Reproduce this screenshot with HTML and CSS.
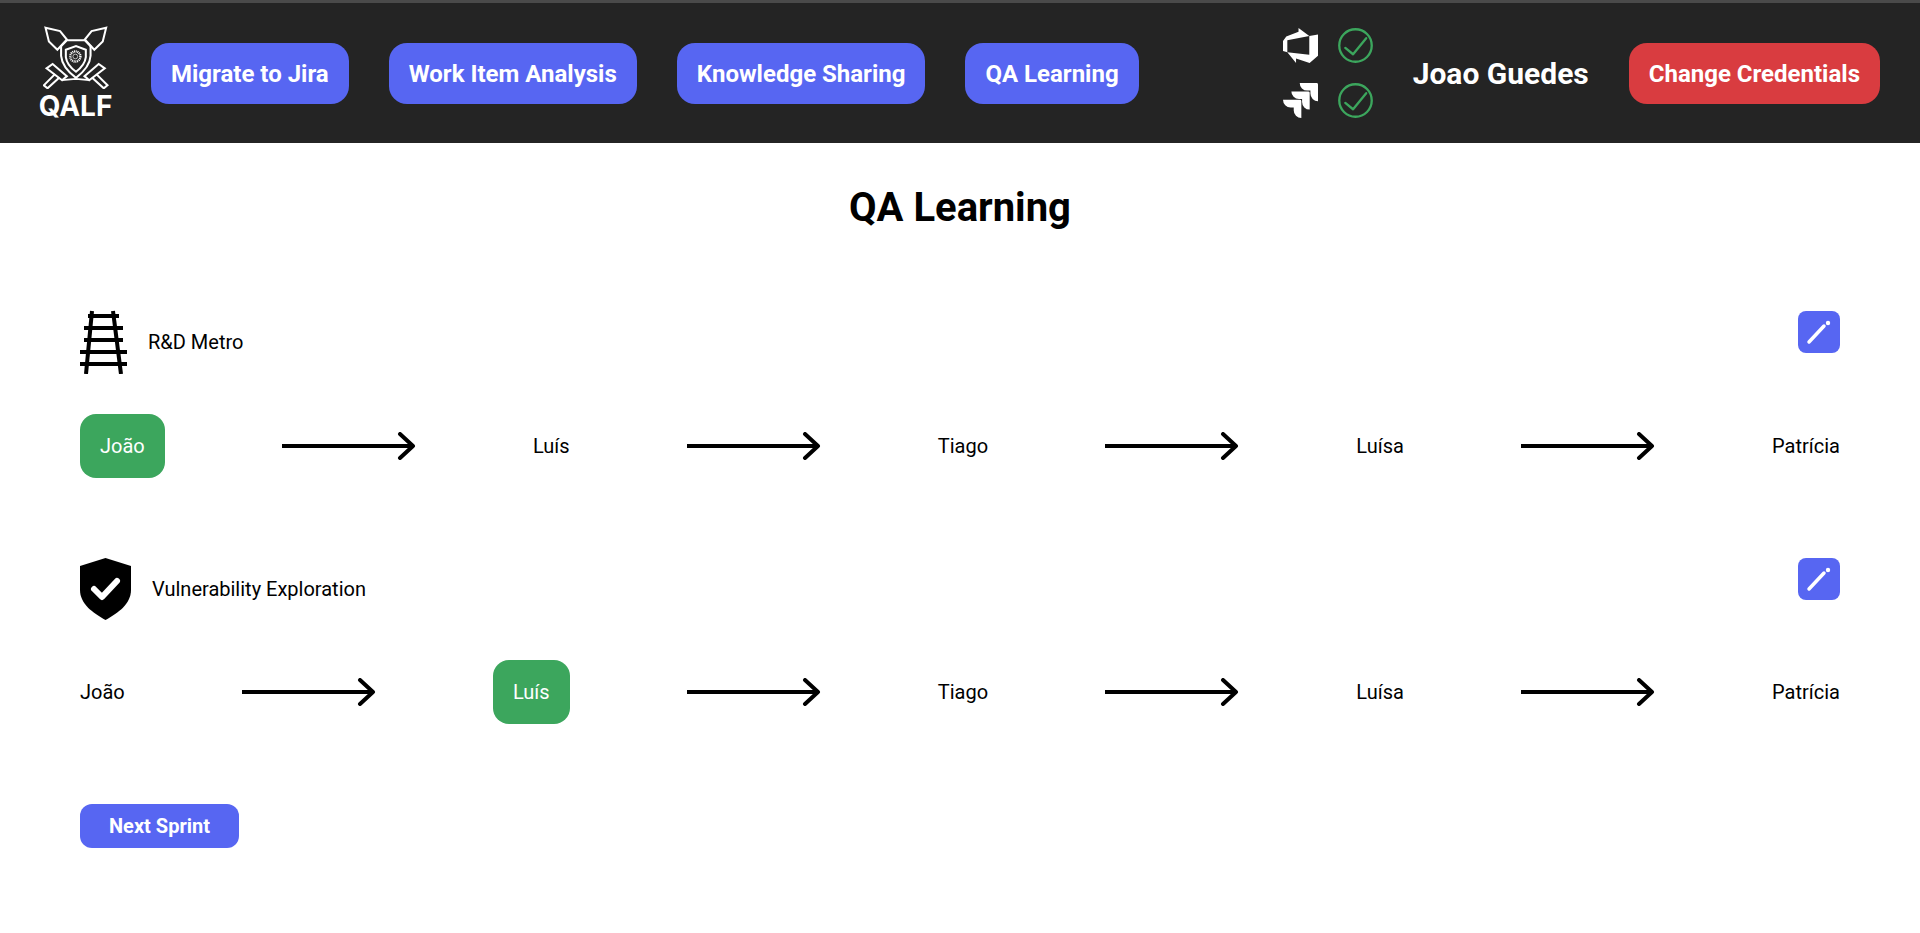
FILE: index.html
```html
<!DOCTYPE html>
<html lang="en">
<head>
    <meta charset="UTF-8">
    <meta name="viewport" content="width=device-width, initial-scale=1.0">
    <title>QA Learning</title>
    <link rel="stylesheet" href="styles.css">
</head>
<body>
    <header class="topbar">
        <div class="logo">
            <svg class="logo-mark" viewBox="40 30 194 186" fill="none" stroke="#fff" stroke-width="6" stroke-linejoin="miter">
                <path d="M47 35 L90 45 L110 70 L82 100 L57 76 Z"/>
                <path d="M226 35 L183 45 L163 70 L191 100 L216 76 Z"/>
                <path d="M92 91 L110 72 H163 L181 91"/>
                <path d="M93 88 V118 Q96 152 137 183 Q178 152 180 118 V88"/>
                <path d="M107 100 L137 89 L166 100 V122 Q163 146 137 165 Q110 146 107 122 Z"/>
                <circle cx="135" cy="120" r="15" stroke-width="7" stroke-dasharray="3 2"/>
                <circle cx="135" cy="120" r="7" stroke-width="2"/>
                <path d="M50 155 L68 142 L110 178 L96 190 Z"/>
                <path d="M222 155 L204 142 L162 178 L176 190 Z"/>
                <path d="M75 172 L42 205 L53 214 L88 182"/>
                <path d="M197 172 L230 205 L219 214 L184 182"/>
                <path d="M96 190 L137 186 L176 190" stroke-width="5"/>
            </svg>
            <span class="logo-text">QALF</span>
        </div>
        <nav class="nav">
            <a class="btn" href="#">Migrate to Jira</a>
            <a class="btn" href="#">Work Item Analysis</a>
            <a class="btn" href="#">Knowledge Sharing</a>
            <a class="btn" href="#">QA Learning</a>
        </nav>
        <div class="status">
            <svg class="status-icon" viewBox="0 0 24 24" fill="#fff"><path d="M0 8.877L2.247 5.91l8.405-3.416V.022l7.37 5.393L2.966 8.338v8.225L0 15.707zm24-4.45v14.651l-5.753 4.9-9.303-3.057v3.056l-5.978-7.416 15.057 1.798V5.415z"/></svg>
            <svg class="status-icon" viewBox="0 0 36 36" fill="none" stroke="#3ca65d" stroke-width="2.4"><circle cx="18" cy="18" r="16.7"/><path d="M7.5 20.5 L15.5 27 L29 10.5" stroke-linecap="round" stroke-linejoin="round"/></svg>
            <svg class="status-icon" viewBox="0 0 24 24" fill="#fff"><path d="M11.571 11.513H0a5.218 5.218 0 0 0 5.232 5.215h2.13v2.057A5.215 5.215 0 0 0 12.575 24V12.518a1.005 1.005 0 0 0-1.005-1.005zm5.723-5.756H5.736a5.215 5.215 0 0 0 5.215 5.214h2.129v2.058a5.218 5.218 0 0 0 5.215 5.214V6.758a1.001 1.001 0 0 0-1.001-1.001zM23.013 0H11.455a5.215 5.215 0 0 0 5.215 5.215h2.129v2.057A5.215 5.215 0 0 0 24 12.483V1.005A1.001 1.001 0 0 0 23.013 0Z"/></svg>
            <svg class="status-icon" viewBox="0 0 36 36" fill="none" stroke="#3ca65d" stroke-width="2.4"><circle cx="18" cy="18" r="16.7"/><path d="M7.5 20.5 L15.5 27 L29 10.5" stroke-linecap="round" stroke-linejoin="round"/></svg>
        </div>
        <span class="username">Joao Guedes</span>
        <a class="btn btn-red" href="#">Change Credentials</a>
    </header>

    <main class="content">
        <h1 class="title">QA Learning</h1>

        <section class="track">
            <div class="track-head">
                <svg class="track-icon rail" viewBox="0 0 47 64" fill="none" stroke="#000" stroke-width="4">
                    <path d="M12 1 L6 64"/>
                    <path d="M33 1 L41 64"/>
                    <path d="M8 6 H39"/>
                    <path d="M4 18 H43"/>
                    <path d="M4 30 H43"/>
                    <path d="M0 42 H47"/>
                    <path d="M0 54 H47"/>
                </svg>
                <span class="track-name">R&amp;D Metro</span>
                <a class="edit" href="#">
                    <svg viewBox="0 0 42 42" width="42" height="42" fill="none" stroke="#fff" stroke-linecap="round">
                        <path d="M11 31 L26 15" stroke-width="3.5"/>
                        <circle cx="30" cy="12" r="2.2" fill="#fff" stroke="none"/>
                    </svg>
                </a>
            </div>
            <div class="steps">
                <span class="step step-active">João</span>
                <svg class="arrow" viewBox="0 0 134 28" fill="none" stroke="#000" stroke-width="4" stroke-linecap="round" stroke-linejoin="round"><path d="M0 14 H130"/><path d="M118 2 L131 14 L118 26"/></svg>
                <span class="step">Luís</span>
                <svg class="arrow" viewBox="0 0 134 28" fill="none" stroke="#000" stroke-width="4" stroke-linecap="round" stroke-linejoin="round"><path d="M0 14 H130"/><path d="M118 2 L131 14 L118 26"/></svg>
                <span class="step">Tiago</span>
                <svg class="arrow" viewBox="0 0 134 28" fill="none" stroke="#000" stroke-width="4" stroke-linecap="round" stroke-linejoin="round"><path d="M0 14 H130"/><path d="M118 2 L131 14 L118 26"/></svg>
                <span class="step">Luísa</span>
                <svg class="arrow" viewBox="0 0 134 28" fill="none" stroke="#000" stroke-width="4" stroke-linecap="round" stroke-linejoin="round"><path d="M0 14 H130"/><path d="M118 2 L131 14 L118 26"/></svg>
                <span class="step">Patrícia</span>
            </div>
        </section>

        <section class="track track-short">
            <div class="track-head">
                <svg class="track-icon shield" viewBox="0 0 51 62">
                    <path d="M25.5 0 L51 8 V32 C51 46 38 55 25.5 62 C13 55 0 46 0 32 V8 Z" fill="#000"/>
                    <path d="M14 31 L22 39 L37 23" fill="none" stroke="#fff" stroke-width="6" stroke-linecap="round" stroke-linejoin="round"/>
                </svg>
                <span class="track-name">Vulnerability Exploration</span>
                <a class="edit" href="#">
                    <svg viewBox="0 0 42 42" width="42" height="42" fill="none" stroke="#fff" stroke-linecap="round">
                        <path d="M11 31 L26 15" stroke-width="3.5"/>
                        <circle cx="30" cy="12" r="2.2" fill="#fff" stroke="none"/>
                    </svg>
                </a>
            </div>
            <div class="steps">
                <span class="step">João</span>
                <svg class="arrow" viewBox="0 0 134 28" fill="none" stroke="#000" stroke-width="4" stroke-linecap="round" stroke-linejoin="round"><path d="M0 14 H130"/><path d="M118 2 L131 14 L118 26"/></svg>
                <span class="step step-active">Luís</span>
                <svg class="arrow" viewBox="0 0 134 28" fill="none" stroke="#000" stroke-width="4" stroke-linecap="round" stroke-linejoin="round"><path d="M0 14 H130"/><path d="M118 2 L131 14 L118 26"/></svg>
                <span class="step">Tiago</span>
                <svg class="arrow" viewBox="0 0 134 28" fill="none" stroke="#000" stroke-width="4" stroke-linecap="round" stroke-linejoin="round"><path d="M0 14 H130"/><path d="M118 2 L131 14 L118 26"/></svg>
                <span class="step">Luísa</span>
                <svg class="arrow" viewBox="0 0 134 28" fill="none" stroke="#000" stroke-width="4" stroke-linecap="round" stroke-linejoin="round"><path d="M0 14 H130"/><path d="M118 2 L131 14 L118 26"/></svg>
                <span class="step">Patrícia</span>
            </div>
        </section>

        <a class="btn btn-small" href="#">Next Sprint</a>
    </main>
</body>
</html>
```

FILE: styles.css
```css
body {
    font-family: Roboto, Arial, sans-serif;
    margin: 0;
    padding: 0;
    background: #fff;
    color: #000;
}
a {
    text-decoration: none;
}
.topbar {
    display: flex;
    align-items: center;
    gap: 40px;
    height: 140px;
    padding: 0 40px;
    background: #242424;
    border-top: 3px solid #4a4a4a;
}
.logo {
    display: flex;
    flex-direction: column;
    align-items: center;
    width: 71px;
}
.logo-mark {
    width: 66px;
    height: 63px;
    margin-bottom: 2px;
}
.logo-text {
    color: #fff;
    font-family: Inter, Arial, sans-serif;
    font-size: 28px;
    font-weight: 700;
    line-height: 30px;
}
.nav {
    display: flex;
    gap: 40px;
}
.btn {
    display: inline-block;
    padding: 0 20px;
    height: 61px;
    line-height: 63px;
    border-radius: 18px;
    background: #5766f2;
    color: #fff;
    font-size: 24px;
    font-weight: 700;
    white-space: nowrap;
}
.btn-red {
    background: #d93c40;
}
.btn-small {
    height: 44px;
    line-height: 44px;
    padding: 0 29px;
    border-radius: 12px;
    font-size: 20px;
}
.status {
    display: grid;
    grid-template-columns: 35px 35px;
    gap: 20px;
    margin-left: auto;
}
.status-icon {
    display: block;
    width: 35px;
    height: 35px;
}
.username {
    color: #fff;
    font-size: 30px;
    font-weight: 700;
}
.content {
    padding: 0 80px;
}
.title {
    margin: 0;
    padding-top: 42px;
    height: 167px;
    box-sizing: border-box;
    font-size: 40px;
    font-weight: 700;
    line-height: 46px;
    text-align: center;
}
.track {
    margin-bottom: 80px;
}
.track-head {
    display: flex;
    align-items: flex-start;
    gap: 21px;
    height: 104px;
}
.track-short .track-head {
    height: 102px;
}
.track-icon {
    flex: none;
}
.rail {
    width: 47px;
    height: 64px;
}
.rail ~ .edit {
    margin-top: 1px;
}
.shield {
    width: 51px;
    height: 62px;
}
.track-name {
    font-size: 20px;
    line-height: 64px;
}
.track-short .track-name {
    line-height: 62px;
}
.edit {
    display: block;
    width: 42px;
    height: 42px;
    margin-left: auto;
    border-radius: 8px;
    background: #5766f2;
}
.steps {
    display: flex;
    align-items: center;
    justify-content: space-between;
    height: 64px;
    font-size: 20px;
}
.step {
    white-space: nowrap;
}
.step-active {
    padding: 0 20px;
    height: 64px;
    line-height: 64px;
    border-radius: 16px;
    background: #3ca65d;
    color: #fff;
}
.arrow {
    width: 134px;
    height: 28px;
}
```
